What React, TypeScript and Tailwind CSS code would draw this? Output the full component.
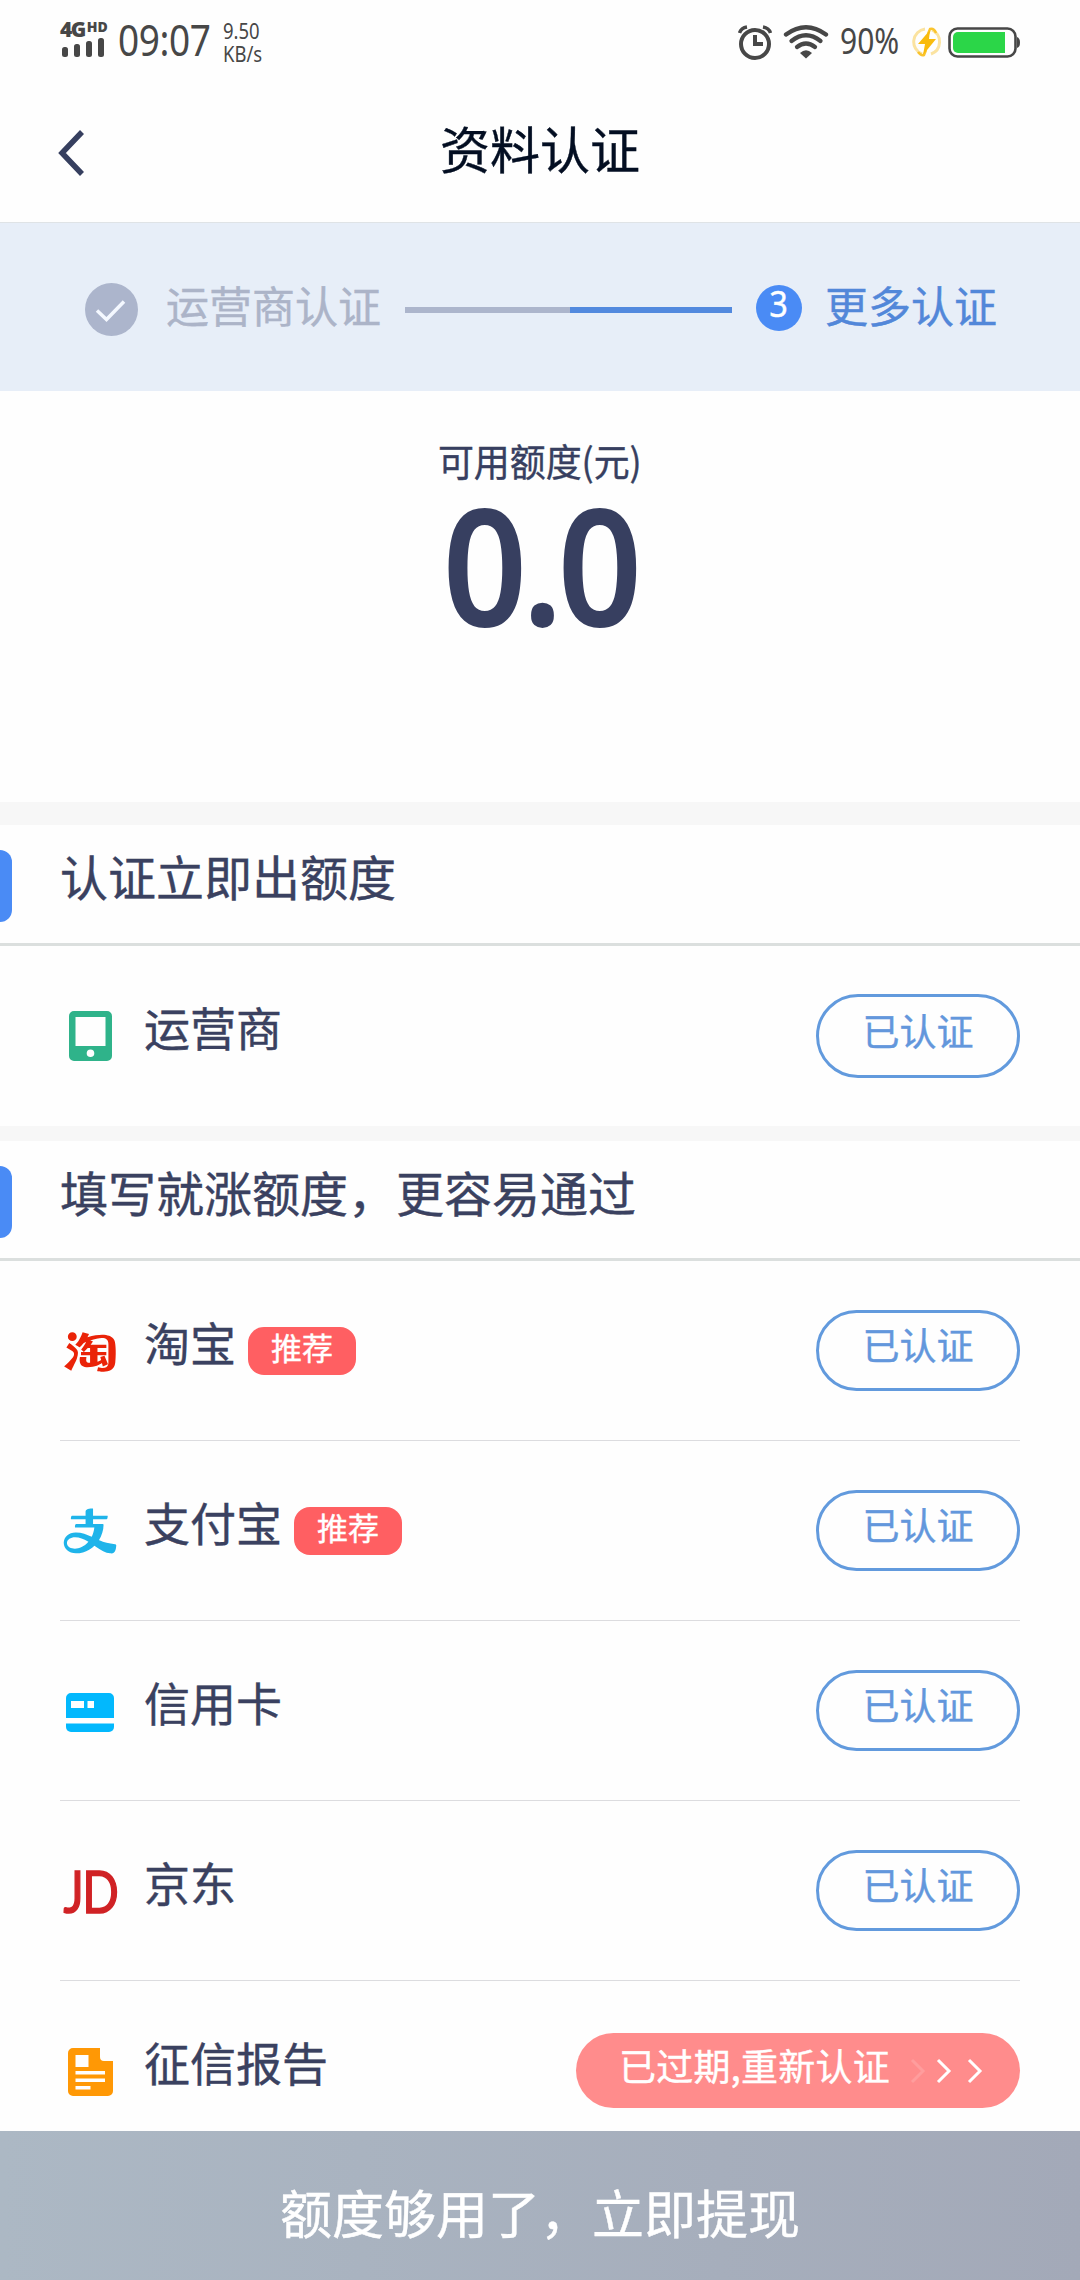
import React from "react"
import { AiOutlineAlipay, AiOutlineTaobao } from "react-icons/ai"

type AuthItem = {
  id: string
  name: string
  icon: React.ReactNode
  recommended?: boolean
  expired?: boolean
}

const PhoneIcon = () => (
  <svg width="43" height="50" viewBox="0 0 43 50">
    <path
      fillRule="evenodd"
      fill="#2fb38a"
      d="M5 0h33a5 5 0 0 1 5 5v40a5 5 0 0 1-5 5H5a5 5 0 0 1-5-5V5a5 5 0 0 1 5-5zM6.500 6v29h30V6zM21.500 38.500a3.800 3.800 0 1 0 0 7.600a3.800 3.800 0 1 0 0-7.600z"
    />
  </svg>
)

const CardIcon = () => (
  <svg width="48" height="39" viewBox="0 0 48 39">
    <path
      fillRule="evenodd"
      fill="#02b8fd"
      d="M5 0h38a5 5 0 0 1 5 5v20H0V5a5 5 0 0 1 5-5zM5 8v7h13V8zM21.500 8v7h6.500V8z"
    />
    <path fill="#02b8fd" d="M0 30.500h48V34a5 5 0 0 1-5 5H5a5 5 0 0 1-5-5z" />
  </svg>
)

const ReportIcon = () => (
  <svg width="45" height="48" viewBox="0 0 45 48">
    <path
      fillRule="evenodd"
      fill="#ff9805"
      d="M5 0h27v9a4 4 0 0 0 4 4h9v30a5 5 0 0 1-5 5H5a5 5 0 0 1-5-5V5a5 5 0 0 1 5-5zM7.500 7v12h13V7zM7.500 23v3.500H37V23zM7.500 30.500V34H37v-3.500zM7.500 38v3.500h15V38z"
    />
  </svg>
)

const items: AuthItem[] = [
  { id: "taobao", name: "淘宝", icon: <AiOutlineTaobao size={66} color="#ea2308" className="shrink-0" />, recommended: true },
  { id: "alipay", name: "支付宝", icon: <AiOutlineAlipay size={60} color="#1fb4ea" className="mb-[3px] shrink-0" />, recommended: true },
  { id: "credit", name: "信用卡", icon: <CardIcon /> },
  {
    id: "jd",
    name: "京东",
    icon: (
      <span className="mb-[3px] scale-x-[0.83] font-['Lato'] text-[58px] leading-none tracking-[-2px] text-[#d02225] [-webkit-text-stroke:1.5px]">
        JD
      </span>
    ),
  },
  { id: "report", name: "征信报告", icon: <ReportIcon />, expired: true },
]

function StatusBar() {
  return (
    <div className="flex h-20 shrink-0 items-start justify-between pl-[60px] pr-[60px] font-['Noto_Sans'] text-[#474747] [-webkit-text-stroke:0px]">
      <div className="flex">
        <div className="w-[58px] pt-[20px]">
          <div className="flex h-[18px] items-start gap-[2px] font-['Open_Sans'] font-extrabold">
            <span className="text-[21px] leading-[19px] tracking-[-1.5px]">4G</span>
            <span className="text-[14px] leading-[14px]">HD</span>
          </div>
          <svg width="44" height="20" viewBox="0 0 44 20" fill="#474747">
            <rect x="2" y="9" width="6" height="10" rx="2.500" />
            <rect x="14" y="6" width="6" height="13" rx="2.500" />
            <rect x="26" y="3" width="6" height="16" rx="2.500" />
            <rect x="38" y="0" width="6" height="19" rx="2.500" />
          </svg>
        </div>
        <div className="w-[105px] pt-[18px]">
          <div className="origin-left scale-x-[0.86] whitespace-nowrap text-[43px] leading-[43px] tracking-[-0.5px]">09:07</div>
        </div>
        <div className="origin-left scale-x-[0.88] whitespace-nowrap pt-[20px] text-[21px] leading-[23px]">
          <div>9.50</div>
          <div>KB/s</div>
        </div>
      </div>
      <div className="flex h-[84px] items-center">
        <svg width="36" height="36" viewBox="0 0 36 36" fill="none" stroke="#474747">
          <circle cx="17" cy="20" r="14" strokeWidth="4" />
          <path d="M17 11v9h8" strokeWidth="4" />
          <path d="M1.500 9Q3 4 9 3M25 3Q31 4 32.500 9" strokeWidth="3.500" />
        </svg>
        <svg className="ml-[9px]" width="46" height="36" viewBox="0 0 46 36" fill="none" stroke="#474747" strokeWidth="4.300" strokeLinecap="round">
          <path d="M3 10.500Q23-4 43 10.500" />
          <path d="M8.500 17Q23 5.500 37.500 17" />
          <path d="M14 23Q23 16 32 23" />
          <path d="M17 29Q23 23.500 29 29L23 34.500z" fill="#474747" stroke="none" />
        </svg>
        <div className="ml-[11px] w-[72px]">
          <div className="origin-left scale-x-[0.81] whitespace-nowrap pb-[5px] text-[37px] leading-[36px]">90%</div>
        </div>
        <svg width="30" height="30" viewBox="0 0 30 30" fill="none">
          <path d="M13 2A13 13 0 0 0 10 27" stroke="#fbe3a0" strokeWidth="3" />
          <path d="M20 3A13 13 0 0 1 19 27" stroke="#fbe3a0" strokeWidth="3" />
          <path d="M6 25Q9 29 12 28l2-5M24 6Q22 1 18 2l-2 5" stroke="#fac42e" strokeWidth="2.500" />
          <path d="M18 3L6 17h7l-2 11L24 12h-7z" fill="#f9bb0d" />
        </svg>
        <svg className="ml-[6px]" width="72" height="31" viewBox="0 0 72 31">
          <rect x="1.500" y="1.500" width="66" height="28" rx="8" fill="none" stroke="#474747" strokeWidth="2.600" />
          <path d="M10 5h47v21H10a5 5 0 0 1-5-5V10a5 5 0 0 1 5-5z" fill="#2bd648" />
          <path d="M69 10q3 1 3 5.500t-3 5.500z" fill="#474747" />
        </svg>
      </div>
    </div>
  )
}

function NavBar() {
  return (
    <div className="grid h-[142px] shrink-0 grid-cols-[1fr_auto_1fr] items-center">
      <svg className="ml-[58px] mt-[3px]" width="27" height="46" viewBox="0 0 27 46" fill="none">
        <path d="M24 2L4 23l20 21" stroke="#363f5f" strokeWidth="5.500" />
      </svg>
      <h1 className="pb-2 text-[50px] leading-none text-[#030e22]">资料认证</h1>
      <div />
    </div>
  )
}

function Steps() {
  return (
    <div className="flex h-[169px] shrink-0 items-center border-t border-[#dfe3e6] bg-[#e7eef8] pl-[85px] pt-[5px]">
      <svg width="53" height="53" viewBox="0 0 53 53" fill="none">
        <circle cx="26.500" cy="26.500" r="26.500" fill="#acb5cc" />
        <path d="M12 27.500l9.500 9L39 18.500" stroke="#f4f8ff" strokeWidth="3.500" />
      </svg>
      <span className="ml-[28px] w-[239px] pb-[10px] text-[43px] leading-none text-[#acb4c8]">运营商认证</span>
      <div className="h-[6px] w-[165px] bg-[#acb5cc]" />
      <div className="h-[6px] w-[162px] bg-[#5289de]" />
      <div className="mb-[3px] ml-6 flex h-[46px] w-[46px] justify-center rounded-full bg-[#4a8bf5] font-['Noto_Sans'] text-[37px] leading-[36px] text-white">
        <span className="scale-x-[0.88]">3</span>
      </div>
      <span className="ml-[23px] pb-[10px] text-[43px] leading-none text-[#5287d9]">更多认证</span>
    </div>
  )
}

function SectionTitle({ children, className = "h-[121px]" }: { children: React.ReactNode; className?: string }) {
  return (
    <div className={`${className} flex shrink-0 items-center border-b-[3px] border-[#dbdfde]`}>
      <div className="mt-[4px] h-[72px] w-3 rounded-r-[12px] bg-[#4a8bf5]" />
      <h2 className="ml-12 pb-[18px] text-[48px] leading-none text-[#3a4160]">{children}</h2>
    </div>
  )
}

function DoneButton({ className = "h-[81px]" }: { className?: string }) {
  return (
    <button className={`${className} w-[204px] rounded-full border-[3px] border-[#629add] pb-[11px] text-[37px] leading-none text-[#6397dc]`}>
      已认证
    </button>
  )
}

function ExpiredButton() {
  return (
    <button className="flex h-[75px] w-[444px] items-center rounded-full bg-[#ff8c8c] pl-[43px] text-white">
      <span className="w-[290px] whitespace-nowrap pb-[9px] text-left text-[37px] leading-none tracking-[0.2px]">已过期,重新认证</span>
      <svg width="76" height="28" viewBox="0 0 76 28" fill="none" stroke="#fff" strokeWidth="3" className="mt-[2px]">
        <path d="M3 3l11 11L3 25" strokeOpacity="0.15" />
        <path d="M29 3l11 11-11 11" />
        <path d="M60 3l11 11-11 11" />
      </svg>
    </button>
  )
}

function AuthRow({ item }: { item: AuthItem }) {
  return (
    <div className="mx-[60px] flex h-[180px] shrink-0 items-center border-b border-[#dcdcdf]">
      <div className="flex w-[60px] shrink-0 items-center justify-center pt-[3px]">{item.icon}</div>
      <span className="ml-6 pb-[19px] text-[46px] leading-none text-[#3a4160]">{item.name}</span>
      {item.recommended && (
        <span className="ml-[12px] flex h-12 w-[108px] justify-center rounded-[16px] bg-[#ff5f62] pt-[4px] text-[31px] leading-[32px] text-white">
          推荐
        </span>
      )}
      <div className="mb-px ml-auto">{item.expired ? <ExpiredButton /> : <DoneButton />}</div>
    </div>
  )
}

export default function App() {
  return (
    <div className="flex h-[2280px] w-[1080px] flex-col overflow-hidden bg-[#fefefe] font-['Noto_Sans_CJK_SC',sans-serif] [-webkit-text-stroke:0.4px]">
      <StatusBar />
      <NavBar />
      <Steps />

      <div className="flex h-[411px] shrink-0 flex-col items-center pt-[50px] text-[#373f60]">
        <div className="scale-x-[0.945] text-[38px] leading-[38px]">可用额度(元)</div>
        <div className="mt-[25px] scale-x-[0.91] font-['Noto_Sans'] text-[163px] font-semibold leading-[118px] tracking-[-6px] [-webkit-text-stroke:0px]">
          0.0
        </div>
      </div>

      <div className="h-[23px] shrink-0 bg-[#f7f7f7]" />
      <SectionTitle>认证立即出额度</SectionTitle>
      <div className="mx-[60px] flex h-[180px] shrink-0 items-center">
        <div className="flex w-[60px] shrink-0 items-center justify-center">
          <PhoneIcon />
        </div>
        <span className="ml-6 pb-[21px] text-[46px] leading-none text-[#3a4160]">运营商</span>
        <div className="ml-auto">
          <DoneButton className="h-[84px]" />
        </div>
      </div>

      <div className="h-[15px] shrink-0 bg-[#f7f7f7]" />
      <SectionTitle className="h-[120px]">填写就涨额度，更容易通过</SectionTitle>
      <div className="flex min-h-0 flex-1 flex-col overflow-hidden">
        {items.map((item) => (
          <AuthRow key={item.id} item={item} />
        ))}
      </div>

      <button className="h-[149px] shrink-0 bg-gradient-to-r from-[#acb8c4] to-[#a3a9b8] pt-[12px] text-[52px] leading-none text-white">
        额度够用了，立即提现
      </button>
    </div>
  )
}
